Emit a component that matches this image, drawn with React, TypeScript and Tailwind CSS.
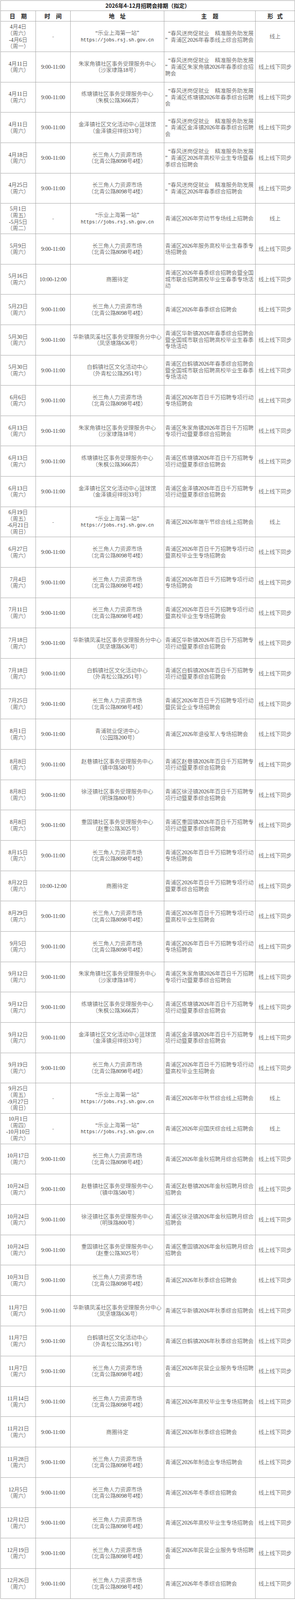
import React from "react";

type Row = {
  date: string[];
  time: string;
  addr: string;
  theme: string[];
  form: string;
};

const ADDR: Record<string, string[]> = {
  csj: ["长三角人力资源市场", "（北青公路8098号4楼）"],
  zjj: ["朱家角镇社区事务受理服务中心", "（沙家埭路18号）"],
  lt: ["练塘镇社区事务受理服务中心", "（朱枫公路3666弄）"],
  jz: ["金泽镇社区文化活动中心篮球馆", "（金泽镇迎祥街33号）"],
  hx: ["华新镇凤溪社区事务受理服务分中心", "（凤坚塘路636号）"],
  bh: ["白鹤镇社区文化活动中心", "（外青松公路2951号）"],
  jy: ["青浦就业促进中心", "（公园路200号）"],
  zx: ["赵巷镇社区事务受理服务中心", "（镇中路580号）"],
  xj: ["徐泾镇社区事务受理服务中心", "（明珠路800号）"],
  cg: ["重固镇社区事务受理服务中心", "（赵重公路3025号）"],
  sq: ["商圈待定"],
  web: ["“乐业上海第一站”"],
};

const T = "9:00-11:00";
const T2 = "10:00-12:00";
const SP = "“春风送岗促就业　精准服务助发展";
const BR = ["青浦区2026年百日千万招聘专项行动", "专场招聘会"];
const BRG = ["青浦区2026年百日千万招聘专项行动", "暨高校毕业生专场招聘会"];
const town = (t: string) => [`青浦区${t}2026年百日千万招聘专`, "项行动暨夏季综合招聘会"];
const sat = (d: string) => [d, "（周六）"];
const L = "线上线下同步";
const ON = "线上";

const rows: Row[] = [
  { date: ["4月4日", "（周六）", "-4月6日", "（周一）"], time: "-", addr: "web", theme: [SP, "”青浦区2026年春季线上综合招聘会"], form: ON },
  { date: sat("4月11日"), time: T, addr: "zjj", theme: [SP, "”青浦区朱家角镇2026年春季综合招", "聘会"], form: L },
  { date: sat("4月11日"), time: T, addr: "lt", theme: [SP, "”青浦区练塘镇2026年春季综合招聘", "会"], form: L },
  { date: sat("4月11日"), time: T, addr: "jz", theme: [SP, "”青浦区金泽镇2026年春季综合招聘", "会"], form: L },
  { date: sat("4月18日"), time: T, addr: "csj", theme: [SP, "”青浦区2026年高校毕业生专场暨春", "季综合招聘会"], form: L },
  { date: sat("4月25日"), time: T, addr: "csj", theme: [SP, "”青浦区2026年春季综合招聘会"], form: L },
  { date: ["5月1日", "（周五）", "-5月5日", "（周二）"], time: "-", addr: "web", theme: ["青浦区2026年劳动节专场线上招聘会"], form: ON },
  { date: sat("5月9日"), time: T, addr: "csj", theme: ["青浦区2026年服务高校毕业生春季专", "场招聘会"], form: L },
  { date: sat("5月16日"), time: T2, addr: "sq", theme: ["青浦区2026年春季综合招聘会暨全国", "城市联合招聘高校毕业生春季专场活", "动"], form: L },
  { date: sat("5月23日"), time: T, addr: "csj", theme: ["青浦区2026年春季综合招聘会"], form: L },
  { date: sat("5月30日"), time: T, addr: "hx", theme: ["青浦区华新镇2026年春季综合招聘会", "暨全国城市联合招聘高校毕业生春季", "专场活动"], form: L },
  { date: sat("5月30日"), time: T, addr: "bh", theme: ["青浦区白鹤镇2026年春季综合招聘会", "暨全国城市联合招聘高校毕业生春季", "专场活动"], form: L },
  { date: sat("6月6日"), time: T, addr: "csj", theme: BR, form: L },
  { date: sat("6月13日"), time: T, addr: "zjj", theme: ["青浦区朱家角镇2026年百日千万招聘", "专项行动暨夏季综合招聘会"], form: L },
  { date: sat("6月13日"), time: T, addr: "lt", theme: town("练塘镇"), form: L },
  { date: sat("6月13日"), time: T, addr: "jz", theme: town("金泽镇"), form: L },
  { date: ["6月19日", "（周五）", "-6月21日", "（周日）"], time: "-", addr: "web", theme: ["青浦区2026年端午节综合线上招聘会"], form: ON },
  { date: sat("6月27日"), time: T, addr: "csj", theme: BRG, form: L },
  { date: sat("7月4日"), time: T, addr: "csj", theme: BR, form: L },
  { date: sat("7月11日"), time: T, addr: "csj", theme: BRG, form: L },
  { date: sat("7月18日"), time: T, addr: "hx", theme: town("华新镇"), form: L },
  { date: sat("7月18日"), time: T, addr: "bh", theme: town("白鹤镇"), form: L },
  { date: sat("7月25日"), time: T, addr: "csj", theme: ["青浦区2026年百日千万招聘专项行动", "暨民营企业专场招聘会"], form: L },
  { date: sat("8月1日"), time: T, addr: "jy", theme: ["青浦区2026年退役军人专场招聘会"], form: L },
  { date: sat("8月8日"), time: T, addr: "zx", theme: town("赵巷镇"), form: L },
  { date: sat("8月8日"), time: T, addr: "xj", theme: town("徐泾镇"), form: L },
  { date: sat("8月8日"), time: T, addr: "cg", theme: town("重固镇"), form: L },
  { date: sat("8月15日"), time: T, addr: "csj", theme: BR, form: L },
  { date: sat("8月22日"), time: T2, addr: "sq", theme: ["青浦区2026年百日千万招聘专项行动", "暨夏季综合招聘会"], form: L },
  { date: sat("8月29日"), time: T, addr: "csj", theme: ["青浦区2026年百日千万招聘专项行动", "暨高校毕业生招聘会"], form: L },
  { date: sat("9月5日"), time: T, addr: "csj", theme: BR, form: L },
  { date: sat("9月12日"), time: T, addr: "zjj", theme: ["青浦区朱家角镇2026年百日千万招聘", "专项行动暨夏季综合招聘会"], form: L },
  { date: sat("9月12日"), time: T, addr: "lt", theme: town("练塘镇"), form: L },
  { date: sat("9月12日"), time: T, addr: "jz", theme: town("金泽镇"), form: L },
  { date: sat("9月19日"), time: T, addr: "csj", theme: ["青浦区2026年百日千万招聘专项行动", "暨高校毕业生招聘会"], form: L },
  { date: ["9月25日", "（周五）", "-9月27日", "（周日）"], time: "-", addr: "web", theme: ["青浦区2026年中秋节综合线上招聘会"], form: ON },
  { date: ["10月1日", "（周四）", "-10月10日", "（周六）"], time: "-", addr: "web", theme: ["青浦区2026年迎国庆综合线上招聘会"], form: ON },
  { date: sat("10月17日"), time: T, addr: "csj", theme: ["青浦区2026年金秋招聘月综合招聘会"], form: L },
  { date: sat("10月24日"), time: T, addr: "zx", theme: ["青浦区赵巷镇2026年金秋招聘月综合", "招聘会"], form: L },
  { date: sat("10月24日"), time: T, addr: "xj", theme: ["青浦区徐泾镇2026年金秋招聘月综合", "招聘会"], form: L },
  { date: sat("10月24日"), time: T, addr: "cg", theme: ["青浦区重固镇2026年金秋招聘月综合", "招聘会"], form: L },
  { date: sat("10月31日"), time: T, addr: "csj", theme: ["青浦区2026年秋季综合招聘会"], form: L },
  { date: sat("11月7日"), time: T, addr: "hx", theme: ["青浦区华新镇2026年秋季综合招聘会"], form: L },
  { date: sat("11月7日"), time: T, addr: "bh", theme: ["青浦区白鹤镇2026年秋季综合招聘会"], form: L },
  { date: sat("11月7日"), time: T, addr: "csj", theme: ["青浦区2026年民营企业服务专场招聘", "会"], form: L },
  { date: sat("11月14日"), time: T, addr: "csj", theme: ["青浦区2026年高校毕业生专场招聘会"], form: L },
  { date: sat("11月21日"), time: T, addr: "sq", theme: ["青浦区2026年秋季综合招聘会"], form: L },
  { date: sat("11月28日"), time: T, addr: "csj", theme: ["青浦区2026年制造业专场招聘会"], form: L },
  { date: sat("12月5日"), time: T, addr: "csj", theme: ["青浦区2026年冬季综合招聘会"], form: L },
  { date: sat("12月12日"), time: T, addr: "csj", theme: ["青浦区2026年高校毕业生专场招聘会"], form: L },
  { date: sat("12月19日"), time: T, addr: "csj", theme: ["青浦区2026年民营企业服务专场招聘", "会"], form: L },
  { date: sat("12月26日"), time: T, addr: "csj", theme: ["青浦区2026年冬季综合招聘会"], form: L },
];

function Txt({ s }: { s: string }) {
  const parts: React.ReactNode[] = [];
  let buf = "";
  let k = 0;
  for (const ch of s) {
    if (ch === "“" || ch === "”") {
      if (buf) parts.push(<span key={k++}>{buf}</span>);
      buf = "";
      parts.push(
        ch === "“" ? (
          <span key={k++} className="inline-block w-[14.2px] text-right">“</span>
        ) : (
          <span key={k++} className="inline-block w-[14.2px] text-left">”</span>
        )
      );
    } else buf += ch;
  }
  if (buf) parts.push(<span key={k++}>{buf}</span>);
  return <>{parts}</>;
}

const cell = "border-r border-b border-[#a3a3a3] flex flex-col justify-center overflow-hidden";
const grid = "grid grid-cols-[90px_89px_240px_234px_101px]";

export default function App() {
  return (
    <div className="w-[756px] bg-white pl-[1px] pt-[1px] text-[#3d3d3d] font-['Liberation_Serif','Noto_Sans_CJK_SC',serif] text-[14.2px] leading-[16.6px] font-light">
      <div className="w-[755px] border-l border-t border-[#a3a3a3]">
        <div className="h-[26.2px] border-r border-b border-[#a3a3a3] flex items-center justify-center font-['Noto_Sans_CJK_SC',sans-serif] font-bold text-[14px] text-[#1a1a1a]">
          2026年4-12月招聘会排期（拟定）
        </div>
        <div className={`${grid} h-[27.1px]`}>
          {[
            ["日", "期", "gap-[15px]"],
            ["时", "间", "gap-[15px]"],
            ["地", "址", "gap-[14px]"],
            ["主", "题", "gap-[15px]"],
            ["形", "式", "gap-[10px]"],
          ].map((h, i) => (
            <div key={i} className={`${cell} items-center font-['Noto_Sans_CJK_SC',sans-serif] font-bold text-[14.5px] text-[#222]`}>
              <div className={`flex justify-center ${h[2]}`}>
                <span>{h[0]}</span>
                <span>{h[1]}</span>
              </div>
            </div>
          ))}
        </div>
        {rows.map((r, i) => (
          <div key={i} className={`${grid} h-[77.67px]`}>
            <div className={`${cell} items-center text-center`}>
              {r.date.map((d, j) => (
                <div key={j} className="whitespace-nowrap">{d}</div>
              ))}
            </div>
            <div className={`${cell} items-center whitespace-nowrap`}>
              {r.time === "-" ? <span className="text-[#888]">-</span> : r.time}
            </div>
            <div className={`${cell} items-center text-center`}>
              {ADDR[r.addr].map((a, j) => (
                <div key={j} className="whitespace-nowrap">
                  <Txt s={a} />
                </div>
              ))}
              {r.addr === "web" && (
                <div className="whitespace-nowrap font-['Liberation_Mono',monospace] text-[12px] leading-[16.6px] pt-[2px]">
                  https://jobs.rsj.sh.gov.cn
                </div>
              )}
            </div>
            <div className={`${cell} items-start pl-[2px]`}>
              {r.theme.map((t, j) => (
                <div key={j} className="whitespace-nowrap">
                  <Txt s={t} />
                </div>
              ))}
            </div>
            <div className={`${cell} items-center whitespace-nowrap`}>{r.form}</div>
          </div>
        ))}
      </div>
    </div>
  );
}
